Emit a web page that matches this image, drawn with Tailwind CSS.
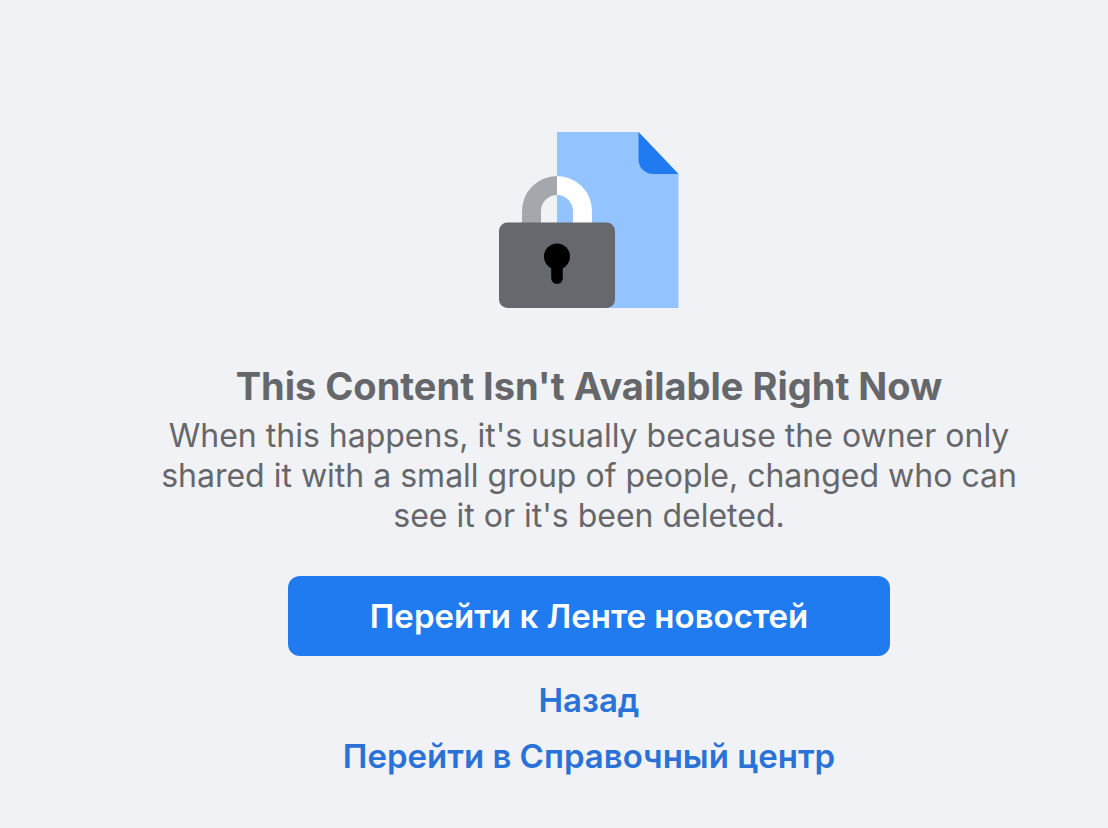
<!DOCTYPE html>
<html lang="ru">
<head>
    <meta charset="UTF-8">
    <meta name="viewport" content="width=device-width, initial-scale=1.0">
    <title>This Content Isn't Available Right Now</title>
    <script src="https://cdn.jsdelivr.net/npm/@tailwindcss/browser@4"></script>
</head>
<body class="bg-[#f0f2f5] min-h-screen font-['Inter',sans-serif]">
    <main class="flex flex-col items-center text-center pt-[131px] pl-[70px]">
        <!-- Locked document -->
        <svg class="w-[180px] h-[178px]" viewBox="0 0 180 178" aria-hidden="true">
            <path d="M58 1h81.500l40 42v134H58z" fill="#94c4ff"/>
            <path d="M139.500 1l40 42H154a14.500 14.500 0 0 1-14.500-14.500z" fill="#217bf0"/>
            <path d="M23 92V80a35 35 0 0 1 35-35v19a16 16 0 0 0-16 16v12z" fill="#a4a7ab"/>
            <path d="M93 92V80a35 35 0 0 0-35-35v19a16 16 0 0 1 16 16v12z" fill="#fff"/>
            <rect x="0" y="91.500" width="116" height="85.500" rx="8.500" fill="#65686c"/>
            <circle cx="58" cy="125.500" r="13" fill="#000"/>
            <rect x="52.200" y="130" width="11.600" height="23" rx="5.800" fill="#000"/>
        </svg>

        <h1 class="mt-[53px] text-[38px] leading-[48px] font-bold text-[#65676b]">This Content Isn't Available Right Now</h1>
        <p class="mt-[6px] w-full max-w-[880px] text-[32px] leading-[40px] text-[#65676b]">When this happens, it's usually because the owner only shared it with a small group of people, changed who can see it or it's been deleted.</p>

        <button type="button" class="mt-10 w-full max-w-[602px] h-20 rounded-xl bg-[#217bf0] text-[33px] leading-[40px] font-semibold text-white">Перейти к Ленте новостей</button>
        <a href="#" class="mt-6 text-[33px] leading-[40px] font-semibold text-[#2a72d8]">Назад</a>
        <a href="#" class="mt-4 text-[33px] leading-[40px] font-semibold text-[#2a72d8]">Перейти в Справочный центр</a>
    </main>
</body>
</html>
